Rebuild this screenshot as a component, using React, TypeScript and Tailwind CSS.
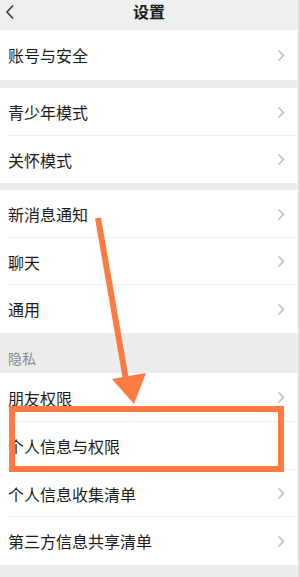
import React from "react";

const Chevron = () => (
  <svg width="8" height="13" viewBox="0 0 8 13" className="shrink-0">
    <path d="M1.5 1.5 L6.5 6.5 L1.5 11.5" fill="none" stroke="#b5b5b5" strokeWidth="1.3" />
  </svg>
);

type RowProps = { label: string; h: string; divider?: boolean };

const Row = ({ label, h, divider }: RowProps) => (
  <div className={`relative flex items-center justify-between bg-white pl-[8px] pr-[13px] ${h}`}>
    <span className="text-[16px] text-[#1c1c1c] leading-none">{label}</span>
    <Chevron />
    {divider && <div className="absolute bottom-0 left-[8px] right-0 h-px bg-[#efefef]" />}
  </div>
);

export default function App() {
  return (
    <div
      className="relative w-[300px] h-[577px] overflow-hidden bg-[#ededed] border-r-2 border-[#dcdcdc]"
      style={{ fontFamily: '"Noto Sans CJK SC", "Noto Sans", sans-serif' }}
    >
      <div className="relative flex h-[30px] items-center justify-center bg-[#efefef]">
        <svg width="10" height="16" viewBox="0 0 10 16" className="absolute left-[5px] top-[4px]">
          <path d="M8 1.5 L2 8 L8 14.5" fill="none" stroke="#333" strokeWidth="1.5" />
        </svg>
        <span className="text-[16px] font-bold text-[#1c1c1c] leading-none -mt-[9px]">设置</span>
      </div>

      <Row label="账号与安全" h="h-[50px]" />
      <div className="h-[8px]" />
      <Row label="青少年模式" h="h-[48px]" divider />
      <Row label="关怀模式" h="h-[47px]" />
      <div className="h-[7px]" />
      <Row label="新消息通知" h="h-[48px]" divider />
      <Row label="聊天" h="h-[47px]" divider />
      <Row label="通用" h="h-[48px]" />
      <div className="flex h-[40px] items-end pb-[8px] pl-[8px]">
        <span className="text-[14px] text-[#8a8a8a] leading-none">隐私</span>
      </div>
      <Row label="朋友权限" h="h-[49px]" divider />
      <Row label="个人信息与权限" h="h-[48px]" divider />
      <Row label="个人信息收集清单" h="h-[47px]" divider />
      <Row label="第三方信息共享清单" h="h-[48px]" />

      <svg className="pointer-events-none absolute left-0 top-0" width="300" height="577" viewBox="0 0 300 577">
        <line x1="98" y1="218" x2="126" y2="380" stroke="#ff7b42" strokeWidth="6" />
        <polygon points="112,379 146,373 134,404" fill="#ff7b42" />
      </svg>
      <div className="absolute left-[9px] top-[406px] h-[66px] w-[275px] border-[6px] border-[#ff7b42]" />
    </div>
  );
}
